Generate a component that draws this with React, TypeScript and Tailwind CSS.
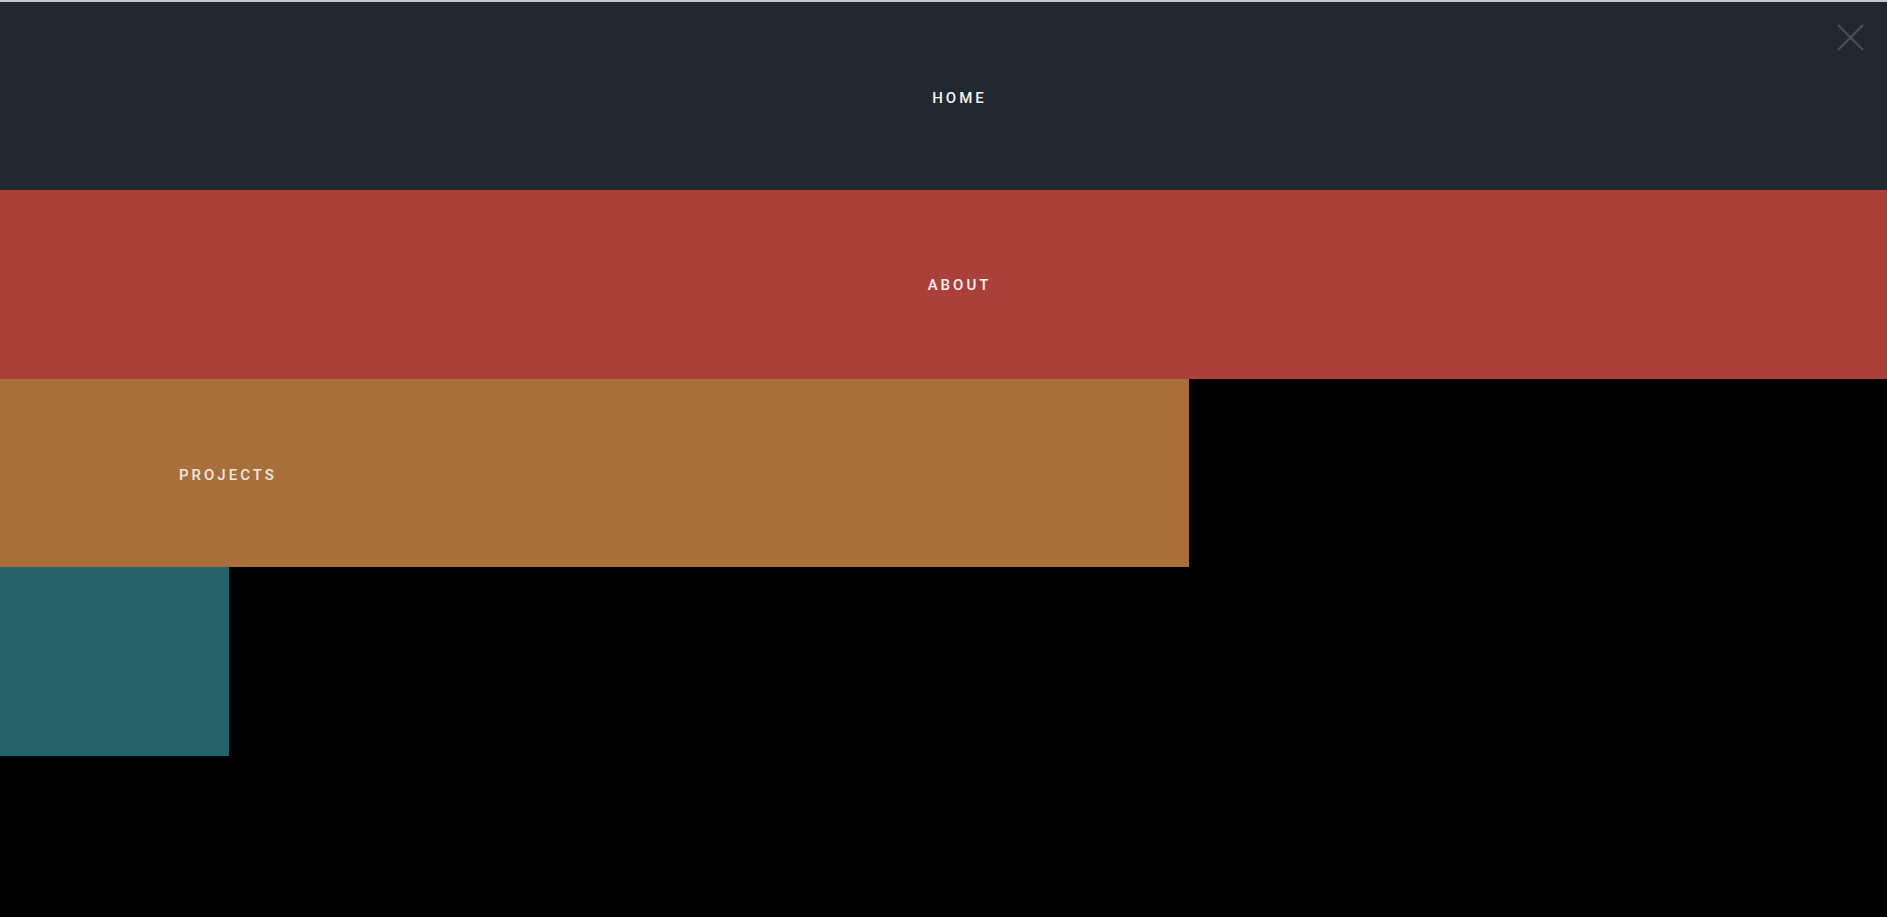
import React from "react";

export default function App() {
  const font = { fontFamily: "Roboto, 'Noto Sans', sans-serif" };
  return (
    <div className="relative w-full h-[917px] bg-black overflow-hidden" style={font}>
      <div className="h-[2px] bg-[#c4c7cb]" />
      <div className="h-[188px] bg-[#22292e] flex items-center justify-center pl-[32px] pt-[5px]">
        <span className="text-[15px] font-medium tracking-[3px] text-[#f4f4f4]">HOME</span>
      </div>
      <div className="h-[189px] bg-[#ab3f3a] flex items-center justify-center pl-[32px] pt-[2px]">
        <span className="text-[15px] font-medium tracking-[3px] text-[#f4f4f4]">ABOUT</span>
      </div>
      <div className="h-[188px] w-[1189px] bg-[#a96f3a] flex items-center pl-[179px] pt-[4px]">
        <span className="text-[15px] font-medium tracking-[3px] text-[#efe9e3]">PROJECTS</span>
      </div>
      <div className="h-[189px] w-[229px] bg-[#266269]" />
      <button className="absolute top-[24px] left-[1837px] w-[27px] h-[27px]" aria-label="close">
        <svg width="27" height="27" viewBox="0 0 27 27">
          <path d="M1 1 L26 26 M26 1 L1 26" stroke="#4b505c" strokeWidth="2" />
        </svg>
      </button>
    </div>
  );
}
